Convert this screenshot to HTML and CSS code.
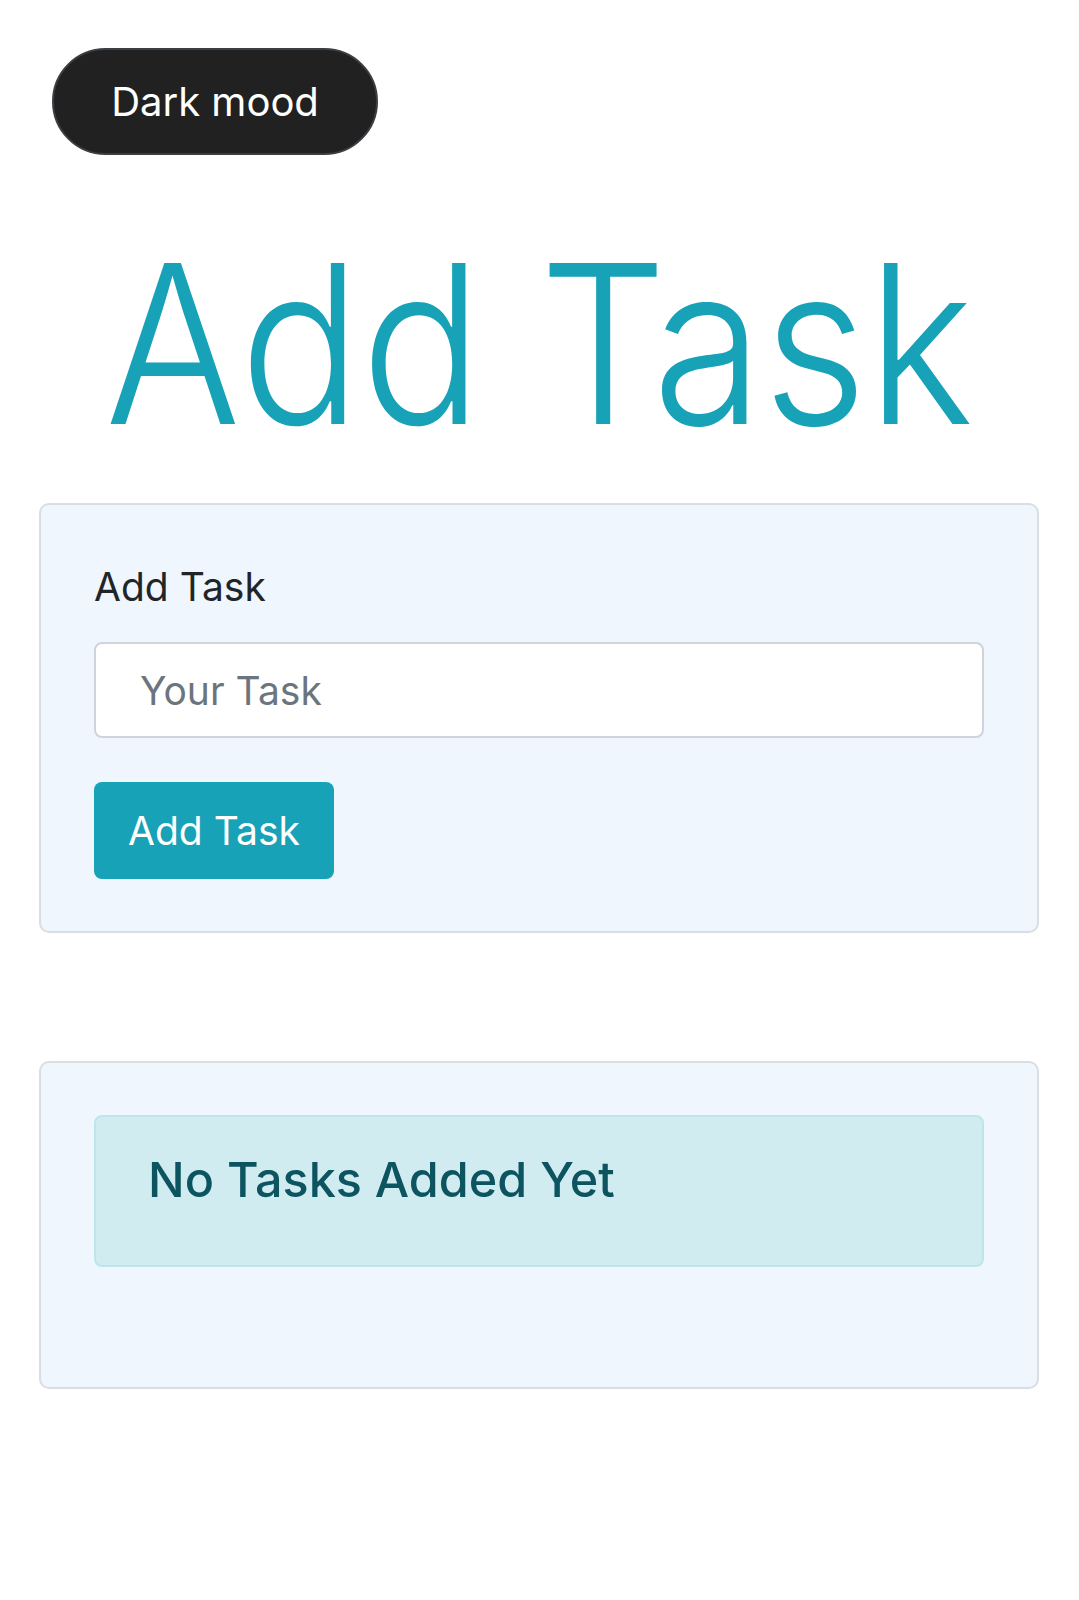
FILE: index.html
```html
<!DOCTYPE html>
<html lang="en">
<head>
<meta charset="utf-8">
<title>Add Task</title>
<link rel="stylesheet" href="styles.css">
</head>
<body>
  <main class="page">
    <button class="mood-btn" type="button">Dark mood</button>
    <h1 class="title"><span class="title-text">Add Task</span></h1>

    <section class="card form-card">
      <label class="field-label" for="task">Add Task</label>
      <input class="field-input" id="task" type="text" placeholder="Your Task">
      <button class="add-btn" type="button">Add Task</button>
    </section>

    <section class="card list-card">
      <div class="alert">
        <h5 class="alert-text">No Tasks Added Yet</h5>
      </div>
    </section>
  </main>
</body>
</html>
```

FILE: styles.css
```css
* {
  box-sizing: border-box;
}

html, body {
  margin: 0;
  padding: 0;
  background: #ffffff;
}

body {
  font-family: "Inter", "Roboto", "Liberation Sans", sans-serif;
  color: #212529;
}

.page {
  width: 1079px;
  padding: 48px 0 0 0;
  display: flex;
  flex-direction: column;
  align-items: flex-start;
}

.mood-btn {
  margin-left: 52px;
  width: 326px;
  height: 107px;
  border-radius: 54px;
  background: #212121;
  border: 2px solid #3a3f44;
  color: #ffffff;
  font-family: inherit;
  font-size: 40px;
  font-weight: 400;
  display: flex;
  align-items: center;
  justify-content: center;
  padding: 0;
}

.title {
  margin: 56px 0 0 0;
  width: 1079px;
  text-align: center;
  font-size: 221px;
  font-weight: 330;
  line-height: 265px;
  color: #17a2b8;
}

.title-text {
  display: inline-block;
  transform: scaleX(0.912);
  transform-origin: center;
}

.card {
  margin-left: 39px;
  width: 1000px;
  border: 2px solid #d9dee3;
  border-radius: 10px;
  background: #eff6fd;
  padding: 52px 53px;
  display: flex;
  flex-direction: column;
  align-items: flex-start;
}

.form-card {
  margin-top: 27px;
}

.field-label {
  font-size: 39px;
  line-height: 60px;
  color: #212529;
}

.field-input {
  margin-top: 25px;
  width: 100%;
  height: 96px;
  border: 2px solid #ced4da;
  border-radius: 8px;
  background: #ffffff;
  padding: 0 44px;
  font-family: inherit;
  font-size: 39px;
  color: #495057;
  outline: none;
}

.field-input::placeholder {
  color: #6c757d;
}

.add-btn {
  margin-top: 44px;
  width: 240px;
  height: 97px;
  border: none;
  border-radius: 8px;
  background: #17a2b8;
  color: #ffffff;
  font-family: inherit;
  font-size: 39px;
  font-weight: 400;
  padding: 0;
  display: flex;
  align-items: center;
  justify-content: center;
}

.list-card {
  margin-top: 128px;
  padding-bottom: 52px;
}

.alert {
  width: 100%;
  margin-bottom: 68px;
  border: 2px solid #bee5eb;
  border-radius: 8px;
  background: #d1ecf1;
  padding: 34px 50px 56px 52px;
}

.alert-text {
  margin: 0;
  font-size: 48.5px;
  font-weight: 500;
  line-height: 57.6px;
  color: #0c5460;
}
```
